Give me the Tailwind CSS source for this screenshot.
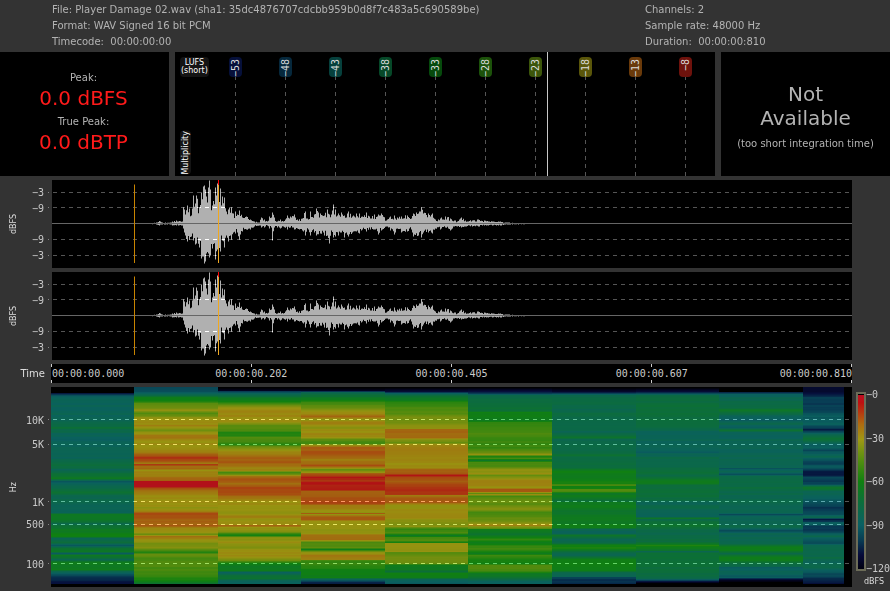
<!DOCTYPE html>
<html lang="en">
<head>
<meta charset="utf-8">
<title>Player Damage 02.wav</title>
<script src="https://cdn.jsdelivr.net/npm/@tailwindcss/browser@4"></script>
</head>
<body class="bg-[#333333] font-['DejaVu_Sans',sans-serif] text-[10px] leading-4 text-[#b3b3b3]">
<header class="grid h-13 grid-cols-[1fr_245px] pt-0.5 pl-[52px]">
  <div>
    <p>File: Player Damage 02.wav (sha1: 35dc4876707cdcbb959b0d8f7c483a5c690589be)</p>
    <p>Format: WAV Signed 16 bit PCM</p>
    <p>Timecode:&nbsp; 00:00:00:00</p>
  </div>
  <div>
    <p>Channels: 2</p>
    <p>Sample rate: 48000 Hz</p>
    <p>Duration:&nbsp; 00:00:00:810</p>
  </div>
</header>

<section class="mb-1 grid h-31 grid-cols-[169px_1fr_169px] gap-1.5">
  <div class="flex flex-col items-center justify-center bg-black pr-0.5 pb-1">
    <p>Peak:</p>
    <p class="mb-1 text-xl leading-6 text-[#ff1a1a]">0.0 dBFS</p>
    <p>True Peak:</p>
    <p class="text-xl leading-6 text-[#ff1a1a]">0.0 dBTP</p>
  </div>
  <div class="relative flex bg-black px-[5px]">
    <div class="flex w-[30px] flex-col items-start justify-between pt-[5px] pb-px text-[8px] text-white">
      <p class="rounded bg-[#141414] px-px py-0.5 text-center leading-2">LUFS<br>(short)</p>
      <p class="rotate-180 rounded bg-[#141414] leading-[11px] [writing-mode:vertical-rl]">Multiplicity</p>
    </div>
    <div id="lufs" class="grid flex-1 grid-cols-10"></div>
    <div class="absolute inset-y-0 left-[68.9%] w-px bg-[#c8c8c8]"></div>
  </div>
  <div class="flex flex-col items-center justify-center bg-black pt-1.5">
    <p class="mb-1.5 text-center text-xl leading-6">Not<br>Available</p>
    <p>(too short integration time)</p>
  </div>
</section>

<main class="grid grid-cols-[52px_1fr_38px] gap-y-1 pb-1">
  <div class="flex justify-between pr-2 pl-2">
    <span class="rotate-180 self-center text-[8px] leading-[11px] text-[#dddddd] [writing-mode:vertical-rl]">dBFS</span>
    <div class="flex flex-col justify-between pt-[5px] pb-1 text-right font-['DejaVu_Sans_Mono',monospace] text-[#c8c8c8]"><p>−3<br>−9</p><p>−9<br>−3</p></div>
  </div>
  <svg class="wave h-22 w-full overflow-visible" viewBox="0 0 800 88" preserveAspectRatio="none" role="img" aria-label="Waveform, channel 1"></svg>
  <div></div>

  <div class="flex justify-between pr-2 pl-2">
    <span class="rotate-180 self-center text-[8px] leading-[11px] text-[#dddddd] [writing-mode:vertical-rl]">dBFS</span>
    <div class="flex flex-col justify-between pt-[5px] pb-1 text-right font-['DejaVu_Sans_Mono',monospace] text-[#c8c8c8]"><p>−3<br>−9</p><p>−9<br>−3</p></div>
  </div>
  <svg class="wave h-22 w-full overflow-visible" viewBox="0 0 800 88" preserveAspectRatio="none" role="img" aria-label="Waveform, channel 2"></svg>
  <div></div>

  <div class="pt-0.5 pr-[7px] text-right text-[#dddddd]">Time</div>
  <div class="relative -ml-px flex h-[19px] items-center justify-between bg-black pt-px pl-px font-['DejaVu_Sans_Mono',monospace] whitespace-nowrap text-[#cccccc]">
    <span>00:00:00.000</span>
    <span class="absolute left-1/4 -translate-x-1/2">00:00:00.202</span>
    <span class="absolute left-1/2 -translate-x-1/2">00:00:00.405</span>
    <span class="absolute left-3/4 -translate-x-1/2">00:00:00.607</span>
    <span>00:00:00.810</span>
    <div class="absolute inset-0 flex justify-between">
      <i class="w-px border-y-3 border-[#cccccc]"></i><i class="w-px border-y-3 border-[#cccccc]"></i><i class="w-px border-y-3 border-[#cccccc]"></i><i class="w-px border-y-3 border-[#cccccc]"></i><i class="w-px border-y-3 border-[#cccccc]"></i>
    </div>
  </div>
  <div></div>

  <div class="flex justify-between pr-2 pl-2">
    <span class="rotate-180 self-center text-[8px] leading-[11px] text-[#dddddd] [writing-mode:vertical-rl]">Hz</span>
    <div class="pt-[26px] text-right font-['DejaVu_Sans_Mono',monospace] text-[#c8c8c8]">
      <p>10K</p><p class="mt-2">5K</p><p class="mt-[42px]">1K</p><p class="mt-1.5">500</p><p class="mt-6">100</p>
    </div>
  </div>
  <div class="relative -ml-px h-50 bg-black">
    <div id="spectrum" class="flex h-full pr-2"></div>
    <svg id="bands" class="absolute inset-0 h-full w-full overflow-visible mix-blend-plus-lighter" viewBox="0 0 801 200" preserveAspectRatio="none"></svg>
  </div>
  <div class="flex h-50 flex-col pl-1">
    <div class="flex min-h-0 flex-1">
      <div id="legend" class="mt-[5px] mb-1.5 w-[10px] shrink-0 border-2 border-[#6c6c58]"></div>
      <div class="flex flex-col justify-between font-['DejaVu_Sans_Mono',monospace] whitespace-nowrap text-[#c8c8c8]"><p>−0</p><p>−30</p><p>−60</p><p>−90</p><p>−120</p></div>
    </div>
    <p class="pl-2 text-[8px] leading-[10px] text-[#dddddd]">dBFS</p>
  </div>
</main>

<script>
// Loudness scale
const lufs = [[53,'#06103a'],[48,'#06283c'],[43,'#06403c'],[38,'#064828'],[33,'#064a0c'],[28,'#1c520a'],[23,'#3c560a'],[18,'#5a560a'],[13,'#6a3a0a'],[8,'#6e120c']];
document.getElementById('lufs').innerHTML = lufs.map(([v, c]) =>
  `<div class="flex flex-col items-center pt-[5px]"><span class="h-5 w-[13px] rotate-180 rounded pb-0.5 text-right font-['DejaVu_Sans_Mono',monospace] leading-[13px] text-[#dddddd] [writing-mode:vertical-rl]" style="background:${c}">−${v}</span><i class="w-px flex-1 bg-[repeating-linear-gradient(#555_0_3px,#000_3px_7px,#555_7px_8px)]"></i></div>`).join('');

// Waveform envelope: time position, upper and lower extent
const env = [[0,0,0],[60,0,0],[75,.3,.3],[100,.5,.8],[104,1,1],[107,2.5,2],[110,1,1],[118,1,1],[120,2,2],[124,3,2],[130,2,2],[131,16,5],[132,14,9],[133,9,12],[135,18,18],[137,15,16],[139,8,13],[141,28,17],[143,20,21],[144,28,20],[147,16,24],[149,31,35],[151,37,33],[152,38,40],[153,34,38],[154,27,30],[156,36,30],[157,43,34],[158,34,32],[160,18,25],[163,36,36],[165,40,26],[166,42,28],[168,35,28],[169,18,12],[170,27,17],[172,26,24],[174,12,12],[176,14,18],[179,16,16],[181,10,9],[183,12,10],[185,9,9],[187,13,16],[190,6,8],[194,7,6],[198,4,6],[202,2,3],[207,1,2],[209,6,4],[212,4,4],[215,2,2],[217,7,5],[219,6,4],[220,11,17],[222,6,4],[225,2,4],[228,4,5],[231,2,3],[235,8,6],[238,7,4],[242,9,6],[245,4,5],[250,5,7],[253,12,12],[256,4,6],[258,12,12],[262,9,9],[264,15,12],[268,10,10],[272,8,12],[275,14,12],[277,9,20],[279,9,7],[281,19,14],[283,14,13],[286,10,12],[289,11,9],[292,8,14],[296,12,13],[300,7,9],[304,10,8],[307,10,10],[310,7,6],[314,11,8],[318,5,6],[322,9,6],[326,9,11],[329,10,7],[334,3,3],[338,7,7],[342,8,11],[345,6,5],[349,7,9],[355,8,8],[359,5,6],[361,10,13],[366,10,12],[369,16,14],[371,10,9],[376,10,9],[380,10,10],[383,4,5],[388,5,6],[393,7,4],[398,5,7],[402,3,3],[405,2,3],[409,6,4],[413,3,3],[420,3,3],[426,4,3],[432,3,2],[440,2,2],[448,2,2],[456,1,1],[466,.5,1],[480,.3,.5],[500,.3,.3],[520,0,0],[800,0,0]];
const noise = (a, b) => { const s = Math.sin(a * 127.1 + b * 311.7) * 43758.5453; return s - Math.floor(s); };
const lerp = (pts, x, k) => {
  let i = 0; while (i < pts.length - 2 && pts[i + 1][0] < x) i++;
  const a = pts[i], b = pts[i + 1], t = Math.min(1, (x - a[0]) / (b[0] - a[0]));
  return a[k] + (b[k] - a[k]) * t;
};
const peaks = new Set(env.map(p => p[0]));
let body = '';
for (let x = 60; x < 520; x++) {
  const f = peaks.has(x) ? 1 : .5 + .6 * noise(x, 1), g = peaks.has(x) ? 1 : .55 + .5 * noise(x, 2);
  const u = lerp(env, x, 1) * f, d = lerp(env, x, 2) * g;
  body += `M${x} ${(43.5 - u).toFixed(1)}h1V${(43.5 + d).toFixed(1)}h-1z`;
}
const dash = (y, w) => `<path d="M-4 ${y}.5H${w}" stroke="#555" stroke-dasharray="4 4" stroke-dashoffset="3"/>`;
document.querySelectorAll('.wave').forEach(svg => svg.innerHTML =
  `<path d="M0 0H800V88H0z"/><path d="${body}" fill="#b0b0b0"/><path d="M0 43.5H800" stroke="#666"/>
  <g class="mix-blend-plus-lighter">${[12, 27, 59, 75].map(y => dash(y, 800)).join('')}</g>
  <path d="M82.5 4.5V83" stroke="#c88400"/><path d="M166.5 4V83" stroke="#f0a820"/><path d="M166.5 0V5" stroke="#f00"/>`);

// Spectrum: each block lists row and level below full scale
const blocks = [
 [83,'0 125 5 125 6 108 8 95 10 88 33 86 40 76 45 84 50 90 60 86 70 87 78 74 82 84 91 68 94 92 98 84 105 72 108 82 115 84 122 86 125 88 127 66 132 68 136 80 140 72 147 60 149 62 151 85 155 74 158 92 161 72 164 68 166 90 168 64 172 84 175 66 182 66 184 84 187 94 189 102 195 108 197 112'],
 [84,'0 97 4 95 6 88 8 80 10 66 13 60 16 45 19 42 23 34 26 48 30 35 33 32 38 28 43 42 45 34 48 25 50 25 53 30 58 32 62 30 66 24 70 12 73 15 75 24 76 26 77 12 79 25 81 22 83 32 86 28 90 24 93 20 94 3 99 3 101 15 104 26 109 32 115 30 120 33 124 28 126 16 129 16 132 20 135 22 138 20 141 30 145 34 147 42 149 25 152 30 156 40 160 38 165 55 167 42 172 50 177 48 185 50 190 54 193 60 196 72'],
 [83,'0 125 3 118 4 100 6 88 9 76 12 64 14 58 17 45 20 34 24 27 30 30 34 32 38 45 43 46 45 58 48 55 50 47 54 50 57 56 59 42 62 34 66 28 70 22 75 18 80 26 83 30 85 50 87 40 89 26 92 18 96 22 100 16 107 15 110 26 115 30 120 33 126 36 130 26 132 33 137 30 138 22 140 30 144 38 148 60 150 38 155 30 160 38 166 28 170 34 173 42 176 58 180 68 183 64 185 90 188 76 191 72 193 85 197 90'],
 [84,'0 125 3 118 5 85 8 74 12 66 15 50 20 45 24 34 29 20 32 34 36 26 40 34 46 30 49 28 52 46 56 50 58 30 60 20 66 18 72 26 76 24 78 18 80 28 82 42 85 34 86 20 89 10 90 3 93 14 95 4 98 10 102 8 104 20 110 18 115 12 118 26 122 28 125 34 126 18 127 32 130 20 132 20 134 34 141 33 146 34 148 22 152 22 155 48 160 46 162 62 163 50 165 34 168 26 172 28 173 50 178 55 184 62 190 62 191 78 193 92 195 105 197 105'],
 [83,'0 125 4 112 6 90 8 78 12 66 15 56 20 50 26 46 30 38 35 42 38 36 41 34 42 22 50 22 52 34 55 44 57 30 62 28 72 30 80 30 82 22 86 18 88 5 90 16 94 20 98 12 103 10 107 14 108 24 111 18 115 20 118 32 130 30 137 40 139 36 142 55 145 46 148 66 150 50 153 48 155 58 156 34 164 34 165 48 170 40 176 44 178 66 182 64 184 74 186 62 190 64 192 88 196 92'],
 [84,'0 125 4 110 6 100 8 82 12 76 20 76 24 72 25 62 30 62 33 66 35 54 40 50 45 48 53 52 60 52 65 44 67 34 69 58 71 48 73 68 75 50 80 46 82 36 86 32 88 44 90 36 93 28 98 28 100 32 102 18 104 20 106 46 107 32 109 48 112 44 118 44 122 36 125 48 130 46 134 40 136 34 138 26 139 34 141 44 142 62 147 70 152 52 155 62 158 56 161 48 166 64 168 50 172 58 176 62 178 48 183 48 186 64 190 74 193 86 196 88'],
 [84,'0 125 4 115 6 98 8 82 15 78 22 84 26 78 32 82 40 81 44 84 48 78 50 72 52 82 66 80 68 72 70 80 80 76 84 62 90 64 96 58 97 50 98 50 99 62 101 60 102 48 104 48 106 66 110 66 114 74 115 64 120 64 124 72 128 66 136 68 138 60 140 64 142 86 146 86 148 68 152 84 156 78 158 58 161 60 165 80 168 84 172 62 183 62 185 82 189 86 190 100 196 104'],
 [83,'0 125 4 112 6 96 8 80 18 76 26 76 40 79 44 86 50 86 60 86 65 90 70 82 76 80 80 82 85 72 88 78 94 66 96 66 98 78 104 76 110 76 116 86 120 82 124 88 129 86 131 70 132 80 138 72 145 82 154 78 158 58 160 66 163 70 164 84 166 72 172 76 180 76 188 78 191 84 193 100 195 118 197 125'],
 [84,'0 125 4 125 5 104 7 90 10 86 13 82 20 78 23 70 26 80 30 88 33 90 36 84 40 90 43 74 45 89 50 88 55 84 58 87 70 85 80 86 81 95 84 86 87 95 89 82 95 80 100 78 105 83 115 82 120 84 125 82 127 98 129 88 132 86 140 82 143 95 146 86 150 84 156 82 160 62 163 66 166 80 170 64 173 66 176 78 179 84 180 90 184 87 190 92 191 104 193 118 195 125 197 125'],
 [41,'0 114 4 114 8 106 10 100 20 100 25 96 30 91 35 89 38 92 42 106 45 95 47 86 51 74 54 80 57 90 60 88 63 97 66 92 69 82 71 92 76 98 80 92 82 98 84 106 88 108 90 98 94 103 97 94 100 70 102 72 104 84 110 90 115 95 120 102 124 98 127 95 130 84 132 110 134 100 135 90 137 92 139 102 143 100 146 92 149 84 152 92 156 96 158 84 165 84 170 80 175 86 180 82 184 92 190 99 192 106 196 109']];
const ramp = [[0,180,14,32],[5,176,18,20],[15,168,70,16],[25,160,118,16],[32,152,146,16],[45,92,140,14],[60,16,128,16],[75,12,110,56],[90,10,96,94],[100,8,60,84],[110,6,16,60],[118,3,4,32],[124,0,0,0],[140,0,0,0]];
const tone = v => `rgb(${[1, 2, 3].map(k => Math.round(lerp(ramp, v, k))).join()})`;
document.getElementById('spectrum').innerHTML = blocks.map(([w, text], c) => {
  const n = text.split(' ').map(Number), pts = [];
  for (let i = 0; i < n.length; i += 2) pts.push([n[i], n[i + 1]]);
  const stops = [];
  for (let y = 0; y < 197; y++) {
    const wobble = y > 8 ? (noise(c + 3, Math.floor(y / 2)) - .5) * 4 : 0;
    stops.push(`${tone(Math.max(0, lerp(pts, y, 1) + wobble))} ${(y + .5) / 2}%`);
  }
  return `<div style="flex:${w} 0 0;background:linear-gradient(${stops.join()},#000 98.5%)"></div>`;
}).join('');
document.getElementById('bands').innerHTML = `<g transform="translate(1)">${[32, 57, 114, 137, 176].map(y => dash(y, 800)).join('')}</g>`;
document.getElementById('legend').style.background = `linear-gradient(#000,#000 1px,#be0f23 1px,#be1010 5%,#b06a10 17%,#a09814 26%,#5a9010 37%,#108010 50%,#0c6e3c 62%,#0a6064 75%,#083a52 84%,#060a3a 92%,#000010)`;
</script>
</body>
</html>
